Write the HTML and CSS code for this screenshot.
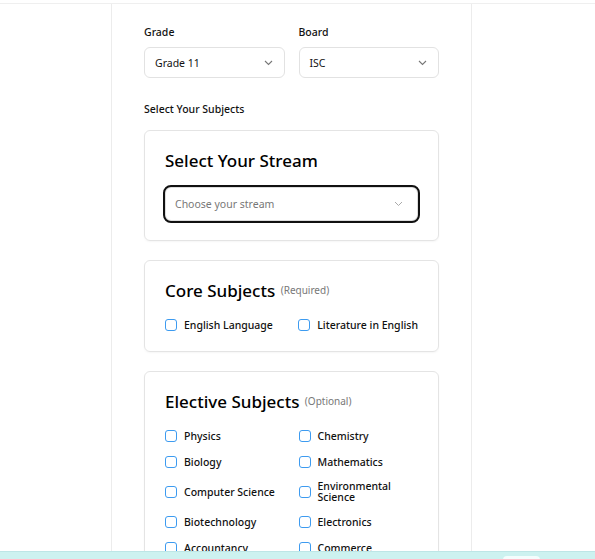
FILE: index.html
```html
<!DOCTYPE html>
<html>
<head>
<meta charset="utf-8">
<link rel="stylesheet" href="styles.css">
</head>
<body>
<div class="topbar"></div>
<div class="page">
  <div class="row2">
    <div class="field">
      <div class="label">Grade</div>
      <div class="select"><span>Grade 11</span><svg class="chev" width="9" height="6" viewBox="0 0 9 6"><path d="M1 1l3.5 3.5L8 1" fill="none" stroke="#777" stroke-width="1.1"/></svg></div>
    </div>
    <div class="field">
      <div class="label">Board</div>
      <div class="select"><span>ISC</span><svg class="chev" width="9" height="6" viewBox="0 0 9 6"><path d="M1 1l3.5 3.5L8 1" fill="none" stroke="#777" stroke-width="1.1"/></svg></div>
    </div>
  </div>
  <div class="label subjects">Select Your Subjects</div>

  <div class="card">
    <h2 class="title">Select Your Stream</h2>
    <div class="stream"><span>Choose your stream</span><svg class="chev" width="9" height="6" viewBox="0 0 9 6"><path d="M1 1l3.5 3.5L8 1" fill="none" stroke="#aaa" stroke-width="1"/></svg></div>
  </div>

  <div class="card">
    <h2 class="title">Core Subjects <small>(Required)</small></h2>
    <div class="grid">
      <label class="check"><span class="box"></span><span class="txt">English Language</span></label>
      <label class="check"><span class="box"></span><span class="txt">Literature in English</span></label>
    </div>
  </div>

  <div class="card">
    <h2 class="title">Elective Subjects <small>(Optional)</small></h2>
    <div class="grid">
      <label class="check"><span class="box"></span><span class="txt">Physics</span></label>
      <label class="check"><span class="box"></span><span class="txt">Chemistry</span></label>
      <label class="check"><span class="box"></span><span class="txt">Biology</span></label>
      <label class="check"><span class="box"></span><span class="txt">Mathematics</span></label>
      <label class="check"><span class="box"></span><span class="txt">Computer Science</span></label>
      <label class="check"><span class="box"></span><span class="txt">Environmental<br>Science</span></label>
      <label class="check"><span class="box"></span><span class="txt">Biotechnology</span></label>
      <label class="check"><span class="box"></span><span class="txt">Electronics</span></label>
      <label class="check"><span class="box"></span><span class="txt">Accountancy</span></label>
      <label class="check"><span class="box"></span><span class="txt">Commerce</span></label>
      <label class="check"><span class="box"></span><span class="txt">Economics</span></label>
      <label class="check"><span class="box"></span><span class="txt">Business Studies</span></label>
    </div>
  </div>
</div>
<div class="bottombar"><div class="pill"></div></div>
</body>
</html>
```
FILE: styles.css
```css
html, body {
  margin: 0;
  padding: 0;
  background: #fff;
  font-family: "Noto Sans", "Open Sans", sans-serif;
  color: #111;
  overflow: hidden;
  height: 559px;
}
.topbar {
  height: 3px;
  border-bottom: 1px solid #efefef;
}
.page {
  width: 295px;
  margin-left: 111px;
  padding: 20px 32px 0;
  border-left: 1px solid #ececec;
  border-right: 1px solid #ececec;
  min-height: 700px;
}
.row2 {
  display: flex;
  gap: 14px;
}
.field {
  flex: 1;
}
.label {
  font-size: 10.5px;
  font-weight: 500;
  line-height: 16px;
  margin-bottom: 7px;
}
.select {
  height: 29px;
  border: 1px solid #e2e2e2;
  border-radius: 6px;
  display: flex;
  align-items: center;
  justify-content: space-between;
  padding: 0 11px 0 10px;
  font-size: 10.5px;
}
.subjects {
  margin-top: 23px;
  margin-bottom: 13px;
}
.card {
  border: 1px solid #e4e4e4;
  border-radius: 6px;
  padding: 19px 20px 19px;
  margin-bottom: 19px;
  box-shadow: 0 1px 2px rgba(0,0,0,0.04);
}
.title {
  margin: 0 0 16px;
  font-size: 17px;
  font-weight: 500;
  line-height: 21px;
  color: #000;
}
.title small {
  font-size: 10px;
  font-weight: 400;
  line-height: 0;
  color: #777;
  margin-left: 1px;
  vertical-align: 3px;
}
.stream {
  height: 32px;
  border: 1px solid #ddd;
  outline: 2px solid #111;
  outline-offset: 0;
  border-radius: 6px;
  display: flex;
  align-items: center;
  justify-content: space-between;
  padding: 0 14px 0 9px;
  font-size: 10.5px;
  color: #777;
}
.grid {
  display: grid;
  grid-template-columns: 1fr 1fr;
  column-gap: 14px;
  row-gap: 12px;
  padding-top: 1px;
}
.check {
  display: flex;
  align-items: center;
  gap: 7px;
  min-height: 14px;
}
.box {
  flex: none;
  width: 10px;
  height: 10px;
  border: 1.5px solid #3d9bf0;
  border-radius: 3px;
}
.txt {
  font-size: 10.5px;
  font-weight: 500;
  line-height: 11px;
  white-space: nowrap;
}
.bottombar {
  position: fixed;
  left: 0;
  right: 0;
  bottom: 0;
  height: 7px;
  background: #cdf2f0;
  border-top: 1px solid #bde6e6;
}
.pill {
  position: absolute;
  left: 503px;
  top: 4px;
  width: 37px;
  height: 10px;
  background: #f4fdfd;
  border-radius: 4px;
}
```
